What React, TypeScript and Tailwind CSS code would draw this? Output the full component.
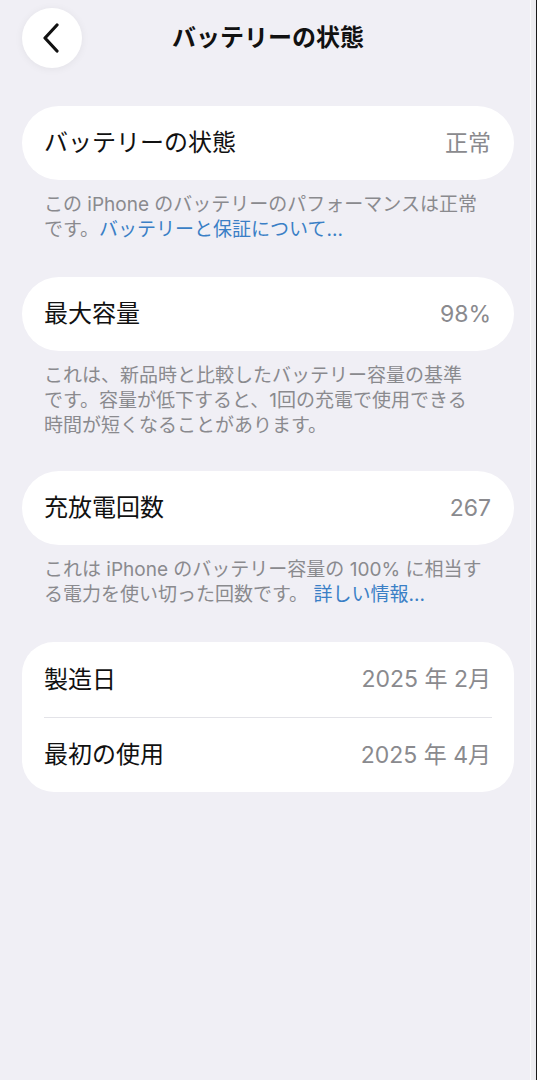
import React from "react";

function Row({ label, value }: { label: string; value: string }) {
  return (
    <div className="flex h-[74px] items-center justify-between rounded-full bg-white pl-[22px] pr-[23px]">
      <span className="text-[24px] text-[#111111]">{label}</span>
      <span className="text-[23px] text-[#8a8a8e]">{value}</span>
    </div>
  );
}

function Footer({ children }: { children: React.ReactNode }) {
  return (
    <p className="mt-[12px] whitespace-nowrap px-[22px] text-[19px] leading-[25px] text-[#8a8a8e]">
      {children}
    </p>
  );
}

export default function App() {
  return (
    <div className="relative min-h-[1080px] w-full bg-[#f0eff5] font-['Inter','Noto_Sans_CJK_JP',sans-serif]">
      <div className="grid grid-cols-[82px_1fr_82px] items-center pl-[22px] pr-[23px] pt-[8px]">
        <button className="flex h-[60px] w-[60px] items-center justify-center rounded-full bg-white shadow-[0_1px_8px_rgba(0,0,0,0.06)]">
          <svg width="20" height="30" viewBox="0 0 20 30" fill="none">
            <path d="M15 2 L3 15 L15 28" stroke="#111" strokeWidth="3.2" strokeLinecap="round" strokeLinejoin="round" />
          </svg>
        </button>
        <h1 className="text-center text-[24px] font-bold text-[#111111]">バッテリーの状態</h1>
        <div />
      </div>

      <div className="mt-[38px] pl-[22px] pr-[23px]">
        <Row label="バッテリーの状態" value="正常" />
        <Footer>
          この iPhone のバッテリーのパフォーマンスは正常
          <br />
          です。<span className="text-[#3a7fc6]">バッテリーと保証について...</span>
        </Footer>

        <div className="mt-[35px]">
          <Row label="最大容量" value="98%" />
        </div>
        <Footer>
          これは、新品時と比較したバッテリー容量の基準
          <br />
          です。容量が低下すると、1回の充電で使用できる
          <br />
          時間が短くなることがあります。
        </Footer>

        <div className="mt-[33px]">
          <Row label="充放電回数" value="267" />
        </div>
        <Footer>
          これは iPhone のバッテリー容量の 100% に相当す
          <br />
          る電力を使い切った回数です。 <span className="text-[#3a7fc6]">詳しい情報...</span>
        </Footer>

        <div className="mt-[35px] rounded-[32px] bg-white">
          <div className="flex h-[75px] items-center justify-between pl-[22px] pr-[23px]">
            <span className="text-[24px] text-[#111111]">製造日</span>
            <span className="text-[23px] text-[#8a8a8e]">2025 年 2月</span>
          </div>
          <div className="mx-[22px] h-px bg-[#e3e3e8]" />
          <div className="flex h-[74px] items-center justify-between pl-[22px] pr-[23px]">
            <span className="text-[24px] text-[#111111]">最初の使用</span>
            <span className="text-[23px] text-[#8a8a8e]">2025 年 4月</span>
          </div>
        </div>
      </div>

      <div className="pointer-events-none absolute right-0 top-0 flex h-full w-[7px]">
        <div className="w-px bg-[#f9f9fb]" />
        <div className="flex-1 bg-[#ececf0]" />
        <div className="w-px bg-[#1a1a1a]" />
      </div>
    </div>
  );
}
